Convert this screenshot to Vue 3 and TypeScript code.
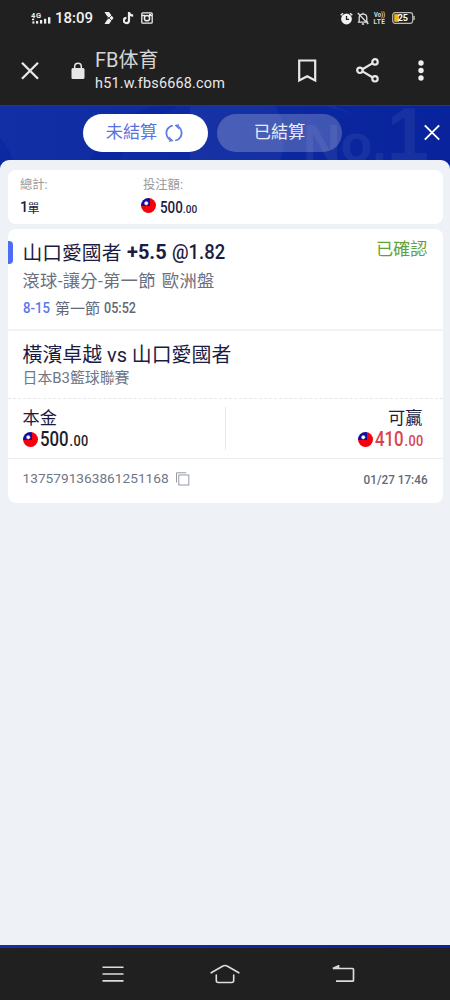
<script setup lang="ts">
interface Money { whole: string; cents: string }

const stake: Money = { whole: '500', cents: '.00' }
const payout: Money = { whole: '410', cents: '.00' }
const orderId = '1375791363861251168'
</script>

<template>
  <div class="phone">
    <header class="status">
      <svg class="signal" width="21" height="14" viewBox="0 0 21 14">
        <text x="0" y="6.600" class="net" textLength="10">4G</text>
        <g fill="#eee">
          <rect x="1" y="7.600" width="2.200" height="1.600" /><rect x="1.400" y="10.400" width="2" height="2.200" />
          <rect x="5" y="10" width="2.200" height="2.600" /><rect x="9" y="9" width="2.200" height="3.600" />
          <rect x="13" y="7.800" width="2.200" height="4.800" /><rect x="17" y="6.200" width="2.400" height="6.400" />
        </g>
      </svg>
      <span class="clock">18:09</span>
      <svg class="app-a" width="10" height="14" viewBox="0 0 10 14" fill="#eee">
        <path d="M.5 1H5L9.500 7 5 13H.5L4 7z" /><path d="M1 4l4 3-4 3M5 7l3-3M5 7l3 3" stroke="#202020" stroke-width=".8" fill="none" />
      </svg>
      <svg class="app-b" width="11" height="14" viewBox="0 0 11 14" fill="none" stroke="#eee" stroke-width="2.200">
        <path d="M6 1v8.500a2.600 2.600 0 1 1-2.600-2.600M6 1.500c.4 2 2 3.200 4.200 3.200" />
      </svg>
      <svg class="app-c" width="12" height="12" viewBox="0 0 12 12" fill="none" stroke="#eee">
        <rect x=".8" y=".8" width="10.400" height="10.400" rx="1" stroke-width="1.300" /><path d="M1 3.600h3M8 3.600h3" stroke-width="1.500" />
        <circle cx="6" cy="6.200" r="2.600" stroke-width="1.500" /><path d="M8 2.500h2" stroke-width="1.600" />
      </svg>
      <span class="grow"></span>
      <svg class="alarm" width="13" height="13" viewBox="0 0 13 13">
        <circle cx="6.500" cy="7" r="5.400" fill="#f2f2f2" /><path d="M.7 3.200L3 1.200M12.300 3.200L10 1.200" stroke="#eee" stroke-width="1.500" />
        <path d="M6.500 4v3.400H9" stroke="#202020" stroke-width="1.300" fill="none" />
      </svg>
      <svg class="bell" width="12" height="13" viewBox="0 0 12 13" fill="none" stroke="#ddd" stroke-width="1.300">
        <path d="M2.200 10V5.500C2.200 3.500 4 2.200 6 2.200s3.800 1.300 3.800 3.300V10M.8 10.200h10.400M6 .8v1.400M4.800 12h2.400M.8 1l10.500 11" />
      </svg>
      <svg class="volte" width="13" height="14" viewBox="0 0 13 14">
        <text x="1" y="6.200" textLength="11" lengthAdjust="spacingAndGlyphs">Vo))</text><text x="0.500" y="12.600" textLength="11.500">LTE</text>
      </svg>
      <svg class="battery" width="23" height="12" viewBox="0 0 23 12">
        <rect x=".7" y=".7" width="20" height="10.600" rx="2.500" fill="none" stroke="#bbb" stroke-width="1.200" />
        <path d="M22 4v4" stroke="#bbb" stroke-width="1.500" /><rect x="2.200" y="2.200" width="4.800" height="7.600" fill="#edb81c" />
        <text x="5.800" y="9.200" textLength="10">25</text>
      </svg>
    </header>

    <nav class="browser">
      <svg class="bx" width="20" height="20" viewBox="0 0 20 20"><path d="M2 1.700l16 16M18 1.700L2 17.700" stroke="#e8e8e8" stroke-width="2.300" /></svg>
      <svg class="lock" width="14" height="18" viewBox="0 0 14 18">
        <rect x=".5" y="6" width="13" height="11" rx="1.500" fill="#e6e6e6" /><path d="M3.700 7V4.500a3.300 3.300 0 0 1 6.600 0V7" fill="none" stroke="#e6e6e6" stroke-width="1.500" />
      </svg>
      <div class="site">
        <div class="title">FB体育</div>
        <div class="host">h51.w.fbs6668.com</div>
      </div>
      <svg class="mark" width="20" height="24" viewBox="0 0 20 24"><path d="M2.200 1.500h16v20l-8-4.200-8 4.200z" fill="none" stroke="#e8e8e8" stroke-width="2.200" /></svg>
      <svg class="share" width="24" height="26" viewBox="0 0 24 26" fill="none" stroke="#e8e8e8" stroke-width="2.200">
        <path d="M6.500 11.200l9.800-5.800M6.500 13.400l9.800 5.800" /><circle cx="3.900" cy="12.300" r="2.700" /><circle cx="19" cy="3.900" r="2.700" /><circle cx="19" cy="20.800" r="2.700" />
      </svg>
      <svg class="dots" width="6" height="22" viewBox="0 0 6 22" fill="#eee"><circle cx="3" cy="3" r="2.700" /><circle cx="3" cy="10.500" r="2.700" /><circle cx="3" cy="18" r="2.700" /></svg>
    </nav>

    <section class="app">
      <svg class="art" width="450" height="72" viewBox="0 0 450 72">
        <path d="M78 72Q105 20 150 0H178Q130 25 110 72zM0 32Q14 46 16 72H0z" fill="#04209a" opacity=".4" />
        <path d="M190 0H275Q292 25 278 60L272 72H190zM325 0H334L356 9Z" fill="#fff" opacity=".04" />
        <text x="303" y="55" font-size="52" textLength="126" lengthAdjust="spacingAndGlyphs" fill="#fff" opacity=".06" class="art-text">No.<tspan font-size="76">1</tspan></text>
      </svg>
      <div class="tabs">
        <div class="tab active">
          <span>未結算</span>
          <svg width="18" height="18" viewBox="0 0 18 18" fill="none" stroke="#5d7be0" stroke-width="1.600">
            <path d="M7 16.400A7.700 7.700 0 0 1 4.200 3M11 1.600A7.700 7.700 0 0 1 13.800 15M2.200 12A7.500 7.500 0 0 1 7.800 1.500M15.800 6a7.500 7.500 0 0 1-5.600 10.500" />
            <path d="M3.600 12.900l3.700 3.700-3.400.5M14.400 5.100l-3.700-3.700 3.400-.5" stroke-width="1.200" />
          </svg>
        </div>
        <div class="tab">已結算</div>
        <svg class="close" width="18" height="18" viewBox="0 0 18 18"><path d="M1.800 1.300l14.400 14.400M16.200 1.300L1.800 15.700" stroke="#fff" stroke-width="1.900" /></svg>
      </div>

      <main class="sheet">
        <div class="card summary">
          <div class="col count">
            <div class="label">總計:</div>
            <div class="value"><b>1</b><span>單</span></div>
          </div>
          <div class="col">
            <div class="label">投注額:</div>
            <div class="value amount"><i class="flag"></i><span class="num">{{ stake.whole }}<small>{{ stake.cents }}</small></span></div>
          </div>
        </div>

        <article class="card bet">
          <div class="pick">
            <span class="accent"></span>
            <div class="line1"><span class="team">山口愛國者</span><strong>+5.5</strong><span class="odds">@1.82</span><span class="state">已確認</span></div>
            <div class="line2">滾球-讓分-第一節 歐洲盤</div>
            <div class="line3"><span class="score">8-15</span><span class="period">第一節</span><span class="time">05:52</span></div>
          </div>
          <div class="match">
            <div class="teams">橫濱卓越 vs 山口愛國者</div>
            <div class="league">日本B3籃球聯賽</div>
          </div>
          <div class="money">
            <div class="side">
              <div class="name">本金</div>
              <div class="sum"><i class="flag"></i><span class="num">{{ stake.whole }}<small>{{ stake.cents }}</small></span></div>
            </div>
            <div class="side win">
              <div class="name">可贏</div>
              <div class="sum"><i class="flag"></i><span class="num">{{ payout.whole }}<small>{{ payout.cents }}</small></span></div>
            </div>
          </div>
          <footer class="foot">
            <span class="order">{{ orderId }}</span>
            <svg class="copy" width="14" height="14" viewBox="0 0 14 14" fill="none" stroke="#969aa3"><path d="M.5 10.500V.8h9.700" /><rect x="2.800" y="3" width="10" height="10" /></svg>
            <span class="date">01/27 17:46</span>
          </footer>
        </article>
      </main>
    </section>

    <footer class="keys">
      <svg width="22" height="18" viewBox="0 0 22 18" stroke="#ddd" stroke-width="1.600"><path d="M.5 2.200h21M.5 9h21M.5 15.900h21" /></svg>
      <svg width="30" height="20" viewBox="0 0 30 20" fill="none" stroke="#ddd" stroke-width="1.600" stroke-linecap="round"><path d="M1.200 8.800L12.500 2.200Q15 .8 17.500 2.200L28.800 8.800M6.300 11v5.500q0 2 2 2h13.400q2 0 2-2V11" /></svg>
      <svg width="23" height="19" viewBox="0 0 23 19" fill="none" stroke="#ddd" stroke-width="1.700"><path d="M.8 3.500h19.700q1 0 1 1v10.700q0 1-1 1H4M.8 3.500L6.500.9v2.300" /></svg>
    </footer>
  </div>
</template>

<style>
body { margin: 0; }
</style>

<style scoped>
.phone { width: 450px; height: 1000px; display: flex; flex-direction: column; overflow: hidden; background: #202020; font-family: Roboto, "Noto Sans CJK TC", sans-serif; color: #1b1c43; }
.phone * { box-sizing: border-box; white-space: nowrap; }
svg { display: block; flex: none; }
.status { height: 36px; display: flex; align-items: center; padding: 0 35px 0 31px; }
.net { font: 700 7.500px Roboto, sans-serif; fill: #eee; }
.clock { width: 39px; margin-left: 3px; font-size: 15px; font-weight: 500; color: #f2f2f2; }
.app-a { margin-left: 10px; }
.app-b { margin-left: 9px; }
.app-c { margin-left: 7px; }
.grow { flex: 1; }
.bell { margin-left: 4px; }
.volte { margin-left: 4px; }
.volte text { font: 700 6.500px Roboto, sans-serif; fill: #ddd; }
.battery { margin-left: 6px; }
.battery text { font: 700 9px Roboto, sans-serif; fill: #fff; }

.browser { height: 69px; display: flex; align-items: center; padding-left: 20px; color: #e8e8e8; }
.lock { margin-left: 31px; }
.site { width: 200px; margin-left: 10px; padding-top: 1px; }
.title { font-size: 20px; line-height: 26px; color: #d5d5d5; font-family: Roboto, "Noto Sans CJK SC", sans-serif; }
.host { font-size: 14.400px; letter-spacing: .2px; line-height: 22px; }
.mark { margin-left: 2px; }
.share { margin-left: 39px; }
.dots { margin-left: 38px; }

.app { height: 843px; position: relative; display: flex; flex-direction: column; background: linear-gradient(90deg, #122fa5, #08239b); border-top: 1px solid #303a55; }
.art { position: absolute; left: 0; top: 0; overflow: visible; }
.art-text { font-family: "Liberation Sans", Arial, sans-serif; font-weight: 700; }
.tabs { position: relative; height: 54px; flex: none; display: flex; align-items: center; padding-left: 83px; }
.tab { width: 125px; height: 38px; border-radius: 19px; background: rgba(255, 255, 255, .22); color: #e9ebfa; font-size: 17.200px; display: flex; align-items: center; justify-content: center; gap: 7px; line-height: 24px; padding-bottom: 2px; }
.tab.active { background: #fff; color: #5873df; margin-right: 9px; gap: 8px; padding-right: 2px; }
.tab.active svg { position: relative; top: .5px; }
.close { margin-left: 81px; }

.sheet { position: relative; height: 785px; background: #eef2f6; border-radius: 9px 9px 0 0; padding: 10px 7.500px 0; }
.card { background: #fff; border-radius: 8px; }
.summary { height: 54px; display: flex; padding: 5px 12.500px 0; }
.count { width: 123px; }
.label { font-size: 12.300px; line-height: 20px; color: #999; }
.value { display: flex; align-items: center; height: 24px; font-size: 12px; }
.value b { font-weight: 500; font-size: 14.500px; width: 7.500px; }
.amount { margin-left: -2.500px; }
.amount .flag { position: relative; top: -2px; }
.amount .num { font-size: 15.600px; margin-left: 4.500px; transform: translateY(1px) scaleX(.86); }
.amount small { font-size: 11.700px; }
.flag { display: block; flex: none; width: 15px; height: 15px; border-radius: 50%; background: radial-gradient(circle at 5.300px 5.300px, #fff 1px, #7d86d0 1.900px, transparent 2.500px), linear-gradient(#160a97, #160a97) 0 0 / 9px 8px no-repeat, #f5000c; }
.num { font-weight: 500; display: inline-block; transform: scaleX(.9); transform-origin: 0 50%; }

.bet { height: 274px; margin-top: 5px; }
.pick { position: relative; height: 101.500px; padding: 9px 15px 0 15.500px; border-bottom: 2px solid #f1f3f5; }
.accent { position: absolute; left: 0; top: 12px; width: 5px; height: 23px; border-radius: 0 4px 4px 0; background: #4d6cf7; }
.line1 { height: 28px; display: flex; align-items: center; font-size: 19.800px; }
.team { width: 104px; position: relative; top: -1px; left: -.5px; }
.line1 strong { font-size: 20px; font-weight: 700; width: 45px; }
.odds { font-weight: 500; font-size: 20.500px; transform: scaleX(.9); transform-origin: 0 50%; }
.state { margin-left: auto; font-size: 17.200px; color: #5fa43a; position: relative; top: -5px; }
.line2 { font-size: 17.300px; letter-spacing: .3px; word-spacing: 1.500px; line-height: 29px; margin-bottom: -1px; color: #6a7080; position: relative; top: .5px; left: -.5px; }
.line3 { display: flex; align-items: center; height: 28px; font-size: 15px; color: #626878; }
.score { width: 32px; font-weight: 500; color: #5b77ec; font-size: 14.500px; transform: scaleX(.91); transform-origin: 0 50%; }
.period { width: 49px; position: relative; top: -1px; }
.time { font-weight: 500; font-size: 15px; transform: scaleX(.84); transform-origin: 0 50%; }
.match { height: 68.500px; padding: 11.500px 15px 0; border-bottom: 1px dashed #e5e7ea; }
.teams { font-size: 19.900px; line-height: 28px; }
.league { font-size: 14.900px; line-height: 20px; margin-top: -2px; color: #6f7686; }
.money { height: 59.500px; display: flex; align-items: center; border-bottom: 1px solid #eaecef; }
.side { flex: 1; height: 43px; padding: 1px 15px 0; }
.side + .side { border-left: 1px solid #e6e8ec; }
.name { font-size: 17.200px; line-height: 21px; }
.sum { display: flex; align-items: center; height: 21px; color: #1e1e2a; }
.sum .num { font-size: 20.500px; margin-left: 2px; transform: translateY(-.5px) scaleX(.82); }
.sum small { font-size: 15.500px; letter-spacing: .5px; margin-left: 1px; }
.win { display: flex; flex-direction: column; align-items: flex-end; }
.win .name { padding-right: 5px; }
.win .sum { color: #d8434f; margin-right: -6.500px; }
.foot { height: 44px; display: flex; align-items: center; padding: 0 15px; font-size: 14px; color: #6f7686; }
.order { width: 153px; font-size: 13.700px; position: relative; top: -3px; }
.copy { position: relative; top: -2px; }
.date { margin-left: auto; font-weight: 500; font-size: 13.500px; color: #646978; position: relative; top: -2px; transform: scaleX(.87); transform-origin: 100% 50%; }
.keys { height: 52px; display: flex; align-items: center; padding-left: 102px; }
.keys svg + svg { margin-left: 86px; }
.keys svg:last-child { margin-left: 92px; }
</style>
